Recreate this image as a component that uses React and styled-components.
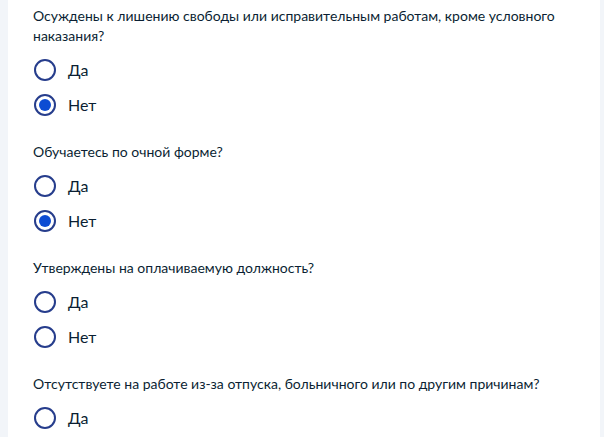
import React from "react";
import styled, { createGlobalStyle } from "styled-components";

const Global = createGlobalStyle`
  html, body {
    margin: 0;
    padding: 0;
    background: #f2f5f9;
  }
  body {
    font-family: Lato, "Noto Sans", sans-serif;
    color: #0b1f33;
  }
`;

const Page = styled.div`
  display: flex;
  min-height: 437px;
`;

const Card = styled.div`
  margin-left: 8px;
  width: 592px;
  background: #fff;
  padding: 6px 25px 0 25px;
  box-sizing: border-box;
`;

const Section = styled.div`
  display: flex;
  flex-direction: column;
  padding-bottom: 20px;
`;

const Question = styled.p`
  margin: 0 0 6px;
  font-size: 14px;
  line-height: 20px;
`;

const Option = styled.label`
  display: flex;
  align-items: center;
  gap: 12px;
  height: 35px;
  font-size: 16px;
  cursor: pointer;
`;

const Radio = styled.span`
  width: 22px;
  height: 22px;
  margin-left: 1px;
  box-sizing: border-box;
  border-radius: 50%;
  border: 2px solid #263d8c;
  display: flex;
  align-items: center;
  justify-content: center;

  &::after {
    content: "";
    width: 12px;
    height: 12px;
    border-radius: 50%;
    background: #0d4cd3;
    display: ${(p) => (p.$checked ? "block" : "none")};
  }
`;

const questions = [
  {
    text: "Осуждены к лишению свободы или исправительным работам, кроме условного наказания?",
    value: "no",
  },
  { text: "Обучаетесь по очной форме?", value: "no" },
  { text: "Утверждены на оплачиваемую должность?", value: null },
  {
    text: "Отсутствуете на работе из-за отпуска, больничного или по другим причинам?",
    value: null,
    only: ["yes"],
  },
];

const options = [
  { key: "yes", label: "Да" },
  { key: "no", label: "Нет" },
];

export default function App() {
  return (
    <Page>
      <Global />
      <Card>
        {questions.map((q, i) => (
          <Section key={i}>
            <Question>{q.text}</Question>
            {options
              .filter((o) => !q.only || q.only.includes(o.key))
              .map((o) => (
                <Option key={o.key}>
                  <Radio $checked={q.value === o.key} />
                  {o.label}
                </Option>
              ))}
          </Section>
        ))}
      </Card>
    </Page>
  );
}
